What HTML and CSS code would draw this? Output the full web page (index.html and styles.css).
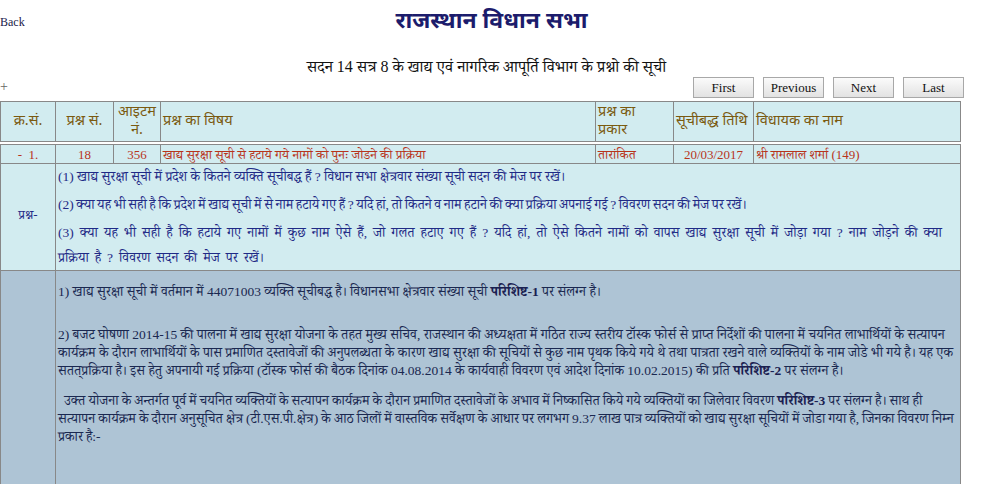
FILE: index.html
```html
<!DOCTYPE html>
<html lang="hi">
<head>
<meta charset="utf-8">
<title>राजस्थान विधान सभा</title>
<link rel="stylesheet" href="styles.css">
</head>
<body>
<div class="top">
  <a class="back" href="#">Back</a>
  <h1 class="title">राजस्थान विधान सभा</h1>
  <span></span>
</div>
<h2 class="subtitle">सदन 14 सत्र 8 के खाद्य एवं नागरिक आपूर्ति विभाग के प्रश्नो की सूची</h2>
<div class="toolbar">
  <span class="plus">+</span>
  <div class="pager">
    <button class="btn">First</button>
    <button class="btn">Previous</button>
    <button class="btn">Next</button>
    <button class="btn">Last</button>
  </div>
</div>
<table class="grid head">
  <colgroup>
    <col class="c1"><col class="c2"><col class="c3"><col class="c4"><col class="c5"><col class="c6"><col class="c7">
  </colgroup>
  <tr>
    <th class="center">क्र.सं.</th>
    <th class="center">प्रश्न सं.</th>
    <th class="center">आइटम<br>नं.</th>
    <th>प्रश्न का विषय</th>
    <th>प्रश्न का<br>प्रकार</th>
    <th>सूचीबद्ध तिथि</th>
    <th>विधायक का नाम</th>
  </tr>
</table>
<table class="grid body">
  <colgroup>
    <col class="c1"><col class="c2"><col class="c3"><col class="c4"><col class="c5"><col class="c6"><col class="c7">
  </colgroup>
  <tr class="rec">
    <td class="center">-&nbsp; 1.</td>
    <td class="center">18</td>
    <td class="center">356</td>
    <td>खाद्य सुरक्षा सूची से हटाये गये नामों को पुनः जोडने की प्रक्रिया</td>
    <td>तारांकित</td>
    <td class="center">20/03/2017</td>
    <td>श्री रामलाल शर्मा (149)</td>
  </tr>
  <tr class="question">
    <td class="center label">प्रश्न-</td>
    <td colspan="6" class="qtext">
      <p>(1) खाद्य सुरक्षा सूची में प्रदेश के कितने व्यक्ति सूचीबद्ध हैं ? विधान सभा क्षेत्रवार संख्या सूची सदन की मेज पर रखें।</p>
      <p class="narrow">(2) क्या यह भी सही है कि प्रदेश में खाद्य सूची में से नाम हटाये गए हैं ? यदि हां, तो कितने व नाम हटाने की क्या प्रक्रिया अपनाई गई ? विवरण सदन की मेज पर रखें।</p>
      <p class="wide">(3) क्या यह भी सही है कि हटाये गए नामों में कुछ नाम ऐसे हैं, जो गलत हटाए गए हैं ? यदि हां, तो ऐसे कितने नामों को वापस खाद्य सुरक्षा सूची में जोड़ा गया ? नाम जोड़ने की क्या प्रक्रिया है ? विवरण सदन की मेज पर रखें।</p>
    </td>
  </tr>
  <tr class="answer">
    <td></td>
    <td colspan="6" class="atext">
      <p>1) खाद्य सुरक्षा सूची में वर्तमान में 44071003 व्यक्ति सूचीबद्ध है। विधानसभा क्षेत्रवार संख्या सूची <b>परिशिष्ट-1</b> पर संलग्न है।</p>
      <p class="gap">2) बजट घोषणा 2014-15 की पालना में खाद्य सुरक्षा योजना के तहत मुख्य सचिव, राजस्थान की अध्यक्षता में गठित राज्य स्तरीय टॉस्क फोर्स से प्राप्त निर्देशों की पालना में चयनित लाभार्थियों के सत्यापन कार्यक्रम के दौरान लाभार्थियों के पास प्रमाणित दस्तावेजों की अनुपलब्धता के कारण खाद्य सुरक्षा की सूचियों से कुछ नाम पृथक किये गये थे तथा पात्रता रखने वाले व्यक्तियों के नाम जोडे भी गये है। यह एक सतत्‌प्रक्रिया है। इस हेतु अपनायी गई प्रक्रिया (टॉस्क फोर्स की बैठक दिनांक 04.08.2014 के कार्यवाही विवरण एवं आदेश दिनांक 10.02.2015) की प्रति <b>परिशिष्ट-2</b> पर संलग्न है।</p>
      <p class="gap2">&nbsp; उक्त योजना के अन्तर्गत पूर्व में चयनित व्यक्तियों के सत्यापन कार्यक्रम के दौरान प्रमाणित दस्तावेजों के अभाव में निष्कासित किये गये व्यक्तियों का जिलेवार विवरण <b>परिशिष्ट-3</b> पर संलग्न है। साथ ही सत्यापन कार्यक्रम के दौरान अनुसूचित क्षेत्र (टी.एस.पी.क्षेत्र) के आठ जिलों में वास्तविक सर्वेक्षण के आधार पर लगभग 9.37 लाख पात्र व्यक्तियों को खाद्य सुरक्षा सूचियों में जोडा गया है, जिनका विवरण निम्न प्रकार है:-</p>
    </td>
  </tr>
</table>
</body>
</html>
```

FILE: styles.css
```css
html, body {
  margin: 0;
  padding: 0;
  background: #ffffff;
  font-family: "Liberation Serif", "Noto Serif Devanagari", "Noto Sans Devanagari", serif;
  color: #000;
}

.top {
  display: grid;
  grid-template-columns: 1fr auto 1fr;
  align-items: center;
  height: 44px;
}

.back {
  font-size: 12px;
  color: #1a1a4a;
  text-decoration: none;
}

.title {
  margin: 0;
  font-family: "Noto Sans Devanagari", "Noto Sans", sans-serif;
  font-size: 23px;
  font-weight: bold;
  color: #1c1c6c;
  text-align: center;
}

.subtitle {
  margin: 12px 0 0 0;
  height: 22px;
  font-size: 16px;
  font-weight: normal;
  text-align: center;
  line-height: 22px;
  color: #111;
  padding-right: 10px;
}

.toolbar {
  display: flex;
  justify-content: space-between;
  align-items: flex-end;
  height: 21px;
  margin-top: -1px;
  padding-right: 19px;
}

.plus {
  font-size: 14px;
  color: #666;
  line-height: 14px;
  padding-bottom: 4px;
}

.pager {
  display: flex;
  gap: 9px;
}

.btn {
  width: 61px;
  height: 21px;
  padding: 0;
  font-family: "Liberation Serif", serif;
  font-size: 13px;
  color: #111;
  background: linear-gradient(#fbfbfb, #e2e2e2);
  border: 1px solid #a8a8a8;
  border-radius: 0;
}

.grid {
  width: 960px;
  border-collapse: collapse;
  table-layout: fixed;
  background: #d2ecf0;
}

.c1 { width: 55px; }
.c2 { width: 58px; }
.c3 { width: 47px; }
.c4 { width: 435px; }
.c5 { width: 78px; }
.c6 { width: 80px; }
.c7 { width: 207px; }

.head {
  border: 1px solid #222;
  margin-top: 3px;
}

.head th {
  border: 1px solid #888;
  height: 39px;
  padding: 0 2px;
  font-family: "Noto Sans Devanagari", "Noto Sans", sans-serif;
  font-size: 14.5px;
  font-weight: normal;
  line-height: 18px;
  color: #7a5a10;
  text-align: left;
  white-space: nowrap;
  overflow: hidden;
}

.head th.center { text-align: center; }

.body {
  border: 1px solid #222;
  margin-top: 2px;
}

.body td {
  border: 1px solid #888;
  padding: 0 2px;
  vertical-align: middle;
}

.center { text-align: center; }

.rec td {
  height: 18px;
  font-size: 13px;
  line-height: 15px;
  color: #b8341b;
  white-space: nowrap;
  overflow: hidden;
}

.question td {
  color: #1f2a86;
}

.label {
  font-size: 13px;
}

.qtext {
  font-size: 13.5px;
}

.qtext p {
  margin: 0;
  line-height: 25px;
}

.qtext p + p { margin-top: 3px; }

.qtext p.narrow {
  font-size: 13.5px;
  word-spacing: -0.8px;
}

.qtext p.wide {
  font-size: 13.5px;
  word-spacing: 2.6px;
}

.answer td {
  background: #aec4d5;
  vertical-align: top;
  color: #1a2850;
  height: 216px;
}

.atext {
  font-size: 13.5px;
  padding-top: 12px !important;
}

.atext p {
  margin: 0;
  line-height: 18px;
}

.atext p.gap { margin-top: 25px; }

.atext p.gap2 {
  margin-top: 12px;
  font-size: 13.5px;
  word-spacing: -0.3px;
}

.atext b { font-weight: bold; color: #1a2050; }
```
